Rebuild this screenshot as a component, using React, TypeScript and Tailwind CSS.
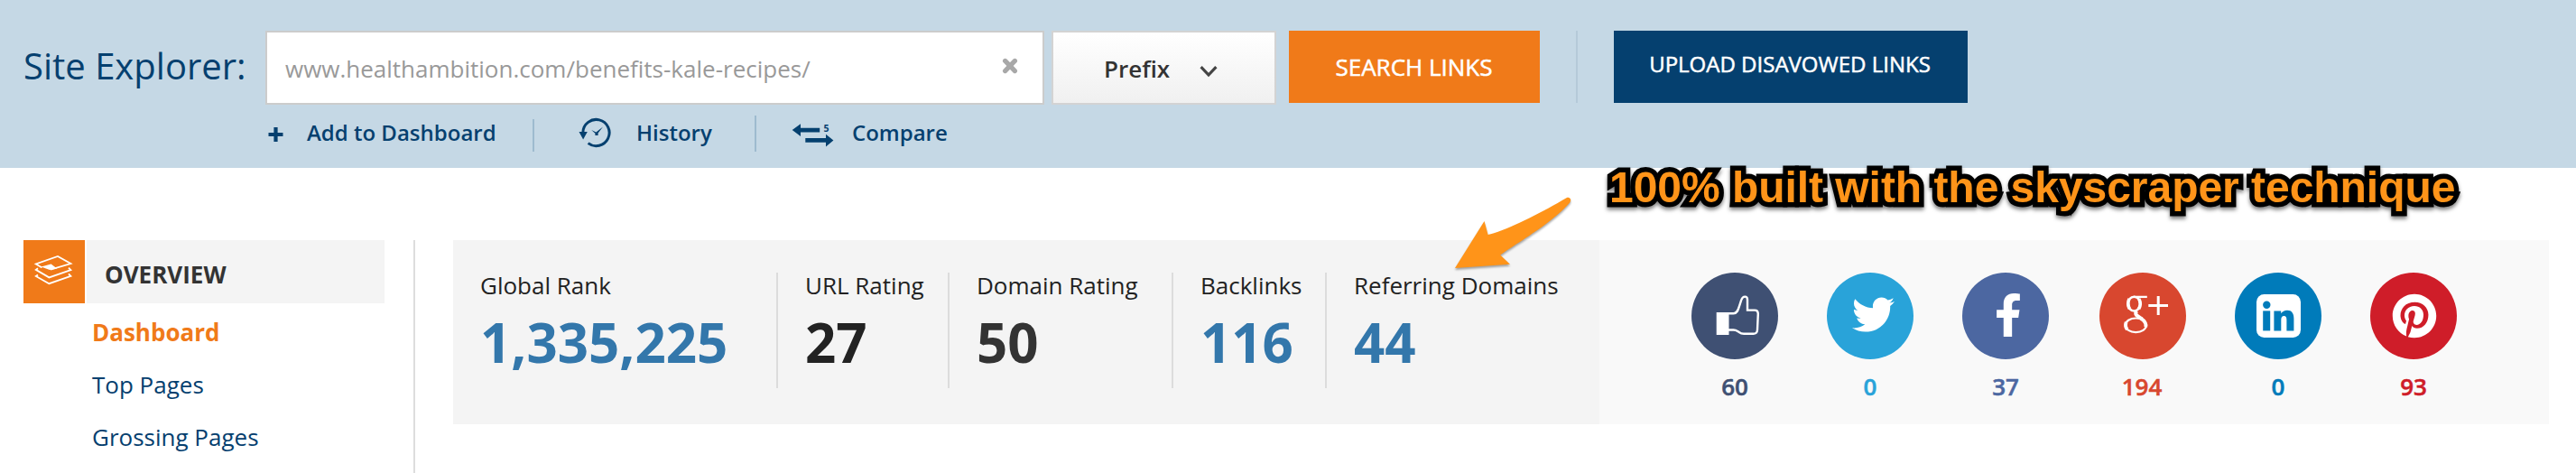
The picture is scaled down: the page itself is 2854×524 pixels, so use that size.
import type { ReactNode } from "react";
import { FaFacebookF, FaPinterest, FaTwitter } from "react-icons/fa";

type Stat = { label: string; value: string; width: string; color: string };

const STATS: Stat[] = [
  { label: "Global Rank", value: "1,335,225", width: "w-[360px] border-r-2", color: "text-[#3377ab]" },
  { label: "URL Rating", value: "27", width: "w-[190px] border-r-2", color: "text-[#222222]" },
  { label: "Domain Rating", value: "50", width: "w-[248px] border-r-2", color: "text-[#333333]" },
  { label: "Backlinks", value: "116", width: "w-[170px] border-r-2", color: "text-[#3377ab]" },
  { label: "Referring Domains", value: "44", width: "w-[302px]", color: "text-[#3377ab]" },
];

type Social = { name: string; count: number; bg: string; color: string; icon: ReactNode };

const SOCIALS: Social[] = [
  { name: "like", count: 60, bg: "bg-[#3f5073]", color: "text-[#3f5073]", icon: <ThumbIcon /> },
  {
    name: "twitter",
    count: 0,
    bg: "bg-[#29a3d9]",
    color: "text-[#29a3d9]",
    icon: <FaTwitter className="mt-[23px] ml-[28px] size-[47px]" />,
  },
  {
    name: "facebook",
    count: 37,
    bg: "bg-[#4c67a1]",
    color: "text-[#4c67a1]",
    icon: <FaFacebookF className="mt-[23px] ml-[27px] size-[48px]" />,
  },
  { name: "gplus", count: 194, bg: "bg-[#d8472f] ml-[2px]", color: "text-[#d8472f]", icon: <GooglePlusIcon /> },
  { name: "linkedin", count: 0, bg: "bg-[#007bba]", color: "text-[#007bba]", icon: <LinkedinIcon /> },
  {
    name: "pinterest",
    count: 93,
    bg: "bg-[#cf1d29]",
    color: "text-[#cf1d29]",
    icon: <FaPinterest className="mt-[23px] ml-[24px] size-[50px]" />,
  },
];

function ThumbIcon() {
  return (
    <svg viewBox="0 0 96 96" className="size-[96px]">
      <rect x="27.7" y="44" width="13.8" height="25" fill="currentColor" />
      <path
        d="M41 45.2H46.5C51 45.2 52 40.5 53.2 36.5L55.2 30.5C56 27.8 57 26.6 59.3 26.6C61.6 26.6 62 28.4 62 30V41.6H70C72.6 41.6 73.8 43.2 73.8 45.8L73 63.5C72.8 66.4 71.4 67.8 68.5 67.8H58C54.5 67.8 53.2 66.2 51.2 64.9C49.4 63.7 48.4 63.5 46.5 63.5H41"
        fill="none"
        stroke="currentColor"
        strokeWidth="2.4"
      />
    </svg>
  );
}

function GooglePlusIcon() {
  return (
    <svg viewBox="0 0 96 96" className="size-[96px]">
      <g fill="none" stroke="currentColor">
        <ellipse cx="38.4" cy="34.6" rx="6.8" ry="7.9" strokeWidth="2.6" />
        <path d="M33 29Q30.4 34.5 33.4 40.2M43.8 29Q46.8 35 43.6 40.2" strokeWidth="3.6" />
        <path d="M38 26.9H52.8" strokeWidth="2.3" />
        <path d="M41.4 42.6C39.4 45 40 46.6 42.4 48.2L47.4 51.6" strokeWidth="4" />
        <ellipse cx="40.3" cy="58.3" rx="11.6" ry="7.8" strokeWidth="2.2" />
        <path d="M45.8 50.6Q52.6 55 51.2 60.2M29.6 54.8Q28 59.5 30.8 63" strokeWidth="3.8" />
        <path d="M54.3 36.5H76M65.2 26V47" strokeWidth="3" />
      </g>
    </svg>
  );
}

function LinkedinIcon() {
  return (
    <svg viewBox="0 0 96 96" className="size-[96px]">
      <rect x="24" y="24" width="49" height="48" rx="8.5" fill="currentColor" />
      <g fill="#007bba">
        <circle cx="35.3" cy="35.8" r="4.2" />
        <rect x="31.2" y="42.4" width="8" height="22" />
        <path d="M43.4 42.4H51.2V45.2C52.8 42.9 55 41.7 58 41.7C63 41.7 65.4 45 65.4 51V64.4H57.4V52.4C57.4 49.6 56.7 48 54.5 48C52.2 48 51.3 49.8 51.3 52.4V64.4H43.4Z" />
      </g>
    </svg>
  );
}

function HistoryIcon() {
  return (
    <svg viewBox="0 0 40 40" className="size-10">
      <path d="M5.9 16.5A14.6 14.6 0 1 1 11.6 28.6" fill="none" stroke="currentColor" strokeWidth="3" />
      <path d="M1.5 16H10.8L6.1 24.6Z" fill="currentColor" />
      <path d="M15.2 14L20.4 16.6L28 10.6L22.6 17.6V20H19.4V17.8Z" fill="currentColor" />
    </svg>
  );
}

function CompareIcon() {
  return (
    <svg viewBox="0 0 50 40" className="h-10 w-[50px]" fill="currentColor">
      <path d="M1.7 14L11 7.2V11.7H32.2V16.4H11V21Z" />
      <path d="M47.4 25.5L39 18.7V23H16.3V27.8H39V32.6Z" />
      <text x="36.6" y="16" fontSize="10.5" fontWeight="700" fontFamily="Open Sans, sans-serif">
        5
      </text>
    </svg>
  );
}

function LayersIcon() {
  return (
    <svg viewBox="0 0 68 70" className="h-[70px] w-[68px]" fill="none" stroke="#fff" strokeWidth="1.8">
      <path d="M20.5 30.4L13.8 26.4L38 18L52.4 26L30 32.6" />
      <path d="M19.6 29.6L30.6 26.4L37.2 31.4L29 33Z" fill="#fff" stroke="none" />
      <path d="M16 31.2L13.8 32.8L28.4 41.4L52.4 33L50 30.6" />
      <path d="M16 38.4L13.8 40L28.4 48.2L52.4 39.8L50 37.4" />
    </svg>
  );
}

function Header() {
  return (
    <header className="h-[186px] bg-[#c5d8e5] text-[#05406f]">
      <div className="flex h-[116px] items-start pt-[34px] whitespace-nowrap">
        <h1 className="w-[294px] pl-[26px] text-[40px] leading-[77px]">Site Explorer:</h1>
        <div className="flex h-[82px] w-[863px] items-center border-2 border-[#cccccc] bg-white pt-[2px] pr-[27px] pl-[20px] text-[26px] text-[#999999]">
          <span className="flex-1">www.healthambition.com/benefits-kale-recipes/</span>
          <svg viewBox="0 0 18 18" className="mb-[7px] size-[18px]">
            <path d="M3.6 3.4L14.4 14.6M14.4 3.4L3.6 14.6" stroke="#a8a8a8" strokeWidth="5.2" strokeLinecap="round" />
          </svg>
        </div>
        <button className="ml-2 flex h-[82px] w-[249px] items-center border-2 border-[#d3d3d3] bg-linear-to-b from-white to-[#f0f0f0] pt-[2px] pl-[56px] text-[26px] font-semibold text-[#333333]">
          Prefix
          <svg viewBox="0 0 22 14" className="mt-[6px] ml-[32px] h-[14px] w-[22px]">
            <path d="M2.6 2.2L11 11L19.4 2.2" fill="none" stroke="#444444" strokeWidth="3.2" />
          </svg>
        </button>
        <button className="ml-[14px] h-20 w-[278px] bg-[#f07a19] pr-px text-[26px] leading-[80px] text-white [-webkit-text-stroke:0.5px_#fff]">
          SEARCH LINKS
        </button>
        <div className="ml-10 h-20 w-[2px] bg-[#b5cad9]" />
        <button className="ml-10 h-20 w-[392px] bg-[#05406f] pr-[2px] pb-[6px] text-[24px] leading-[74px] text-white [-webkit-text-stroke:0.5px_#fff]">
          UPLOAD DISAVOWED LINKS
        </button>
      </div>
      <nav className="flex h-[52px] items-end pl-[297px] text-[24px] leading-[36px] font-semibold whitespace-nowrap">
        <svg viewBox="0 0 17 16" className="mb-[11px] h-4 w-[17px]">
          <path d="M0.5 8H16.5M8.5 0V16" stroke="currentColor" strokeWidth="4.2" />
        </svg>
        <span className="ml-[26px] w-[250px] pb-[3px]">Add to Dashboard</span>
        <div className="h-9 w-[2px] bg-[#9ebbcf]" />
        <span className="ml-12 h-[38px]">
          <HistoryIcon />
        </span>
        <span className="ml-[25px] w-[131px] pb-[3px]">History</span>
        <div className="h-10 w-[2px] bg-[#9ebbcf]" />
        <span className="ml-[38px] h-[38px]">
          <CompareIcon />
        </span>
        <span className="ml-[18px] pb-[3px]">Compare</span>
      </nav>
    </header>
  );
}

function Sidebar() {
  return (
    <aside className="h-[258px] w-[434px] border-r-2 border-[#dddddd] text-[26px] text-[#05406f]">
      <div className="flex h-[70px]">
        <div className="w-[68px] bg-[#f07a19]">
          <LayersIcon />
        </div>
        <div className="ml-[2px] w-[330px] bg-[#f4f4f4] pt-[6px] pl-[20px] leading-[64px] font-bold text-[#333333]">
          OVERVIEW
        </div>
      </div>
      <ul className="mt-[3px] pl-[76px] leading-[58px]">
        <li className="font-bold text-[#f07a19]">Dashboard</li>
        <li>Top Pages</li>
        <li>Grossing Pages</li>
      </ul>
    </aside>
  );
}

function Annotation() {
  return (
    <>
      <svg viewBox="0 0 140 90" className="absolute top-[214px] left-[1606px] h-[90px] w-[140px] drop-shadow-[0_2px_1px_rgba(0,0,0,0.35)]">
        <path
          d="M6 83L38.5 31L42.6 46C62 42 101 22 129.5 5.2C133 3.4 135.8 7.2 133.2 10.4C113 34 70 58 56.2 68.5L67 78.8Z"
          fill="#ff9419"
        />
      </svg>
      <p className="absolute top-[184px] left-[1783px] font-['Liberation_Sans',sans-serif] text-[48px] leading-[48px] font-bold tracking-[-0.04px] whitespace-nowrap text-[#ff9419] [paint-order:stroke_fill] [-webkit-text-stroke:11px_#000] [stroke-linejoin:round] drop-shadow-[0_3px_2px_rgba(0,0,0,0.5)]">
        100% built with the skyscraper technique
      </p>
    </>
  );
}

export default function App() {
  return (
    <div className="relative h-[524px] w-[2854px] overflow-hidden bg-white font-['Open_Sans',sans-serif]">
      <Header />
      <main className="flex items-start pt-20 pl-[26px]">
        <Sidebar />
        <section className="ml-[42px] flex h-[204px] w-[1270px] bg-[#f4f4f4] pt-9">
          {STATS.map((s) => (
            <div key={s.label} className={`h-32 border-[#dcdcdc] pl-[30px] ${s.width}`}>
              <div className="text-[26px] leading-[28px] whitespace-nowrap text-[#222222]">{s.label}</div>
              <div className={`mt-[15px] text-[60px] leading-[68px] font-bold ${s.color}`}>{s.value}</div>
            </div>
          ))}
        </section>
        <section className="flex h-[204px] w-[1052px] gap-[54px] bg-[#f9f9f9] pt-9 pl-[102px]">
          {SOCIALS.map((s) => (
            <div key={s.name}>
              <div className={`size-24 rounded-full ${s.bg}`}>
                <div className="flex h-24 items-start text-white">{s.icon}</div>
              </div>
              <div
                className={`mt-3 text-center text-[26px] leading-[36px] font-semibold [-webkit-text-stroke:0.5px_currentColor] ${s.color}`}
              >
                {s.count}
              </div>
            </div>
          ))}
        </section>
      </main>
      <Annotation />
    </div>
  );
}
